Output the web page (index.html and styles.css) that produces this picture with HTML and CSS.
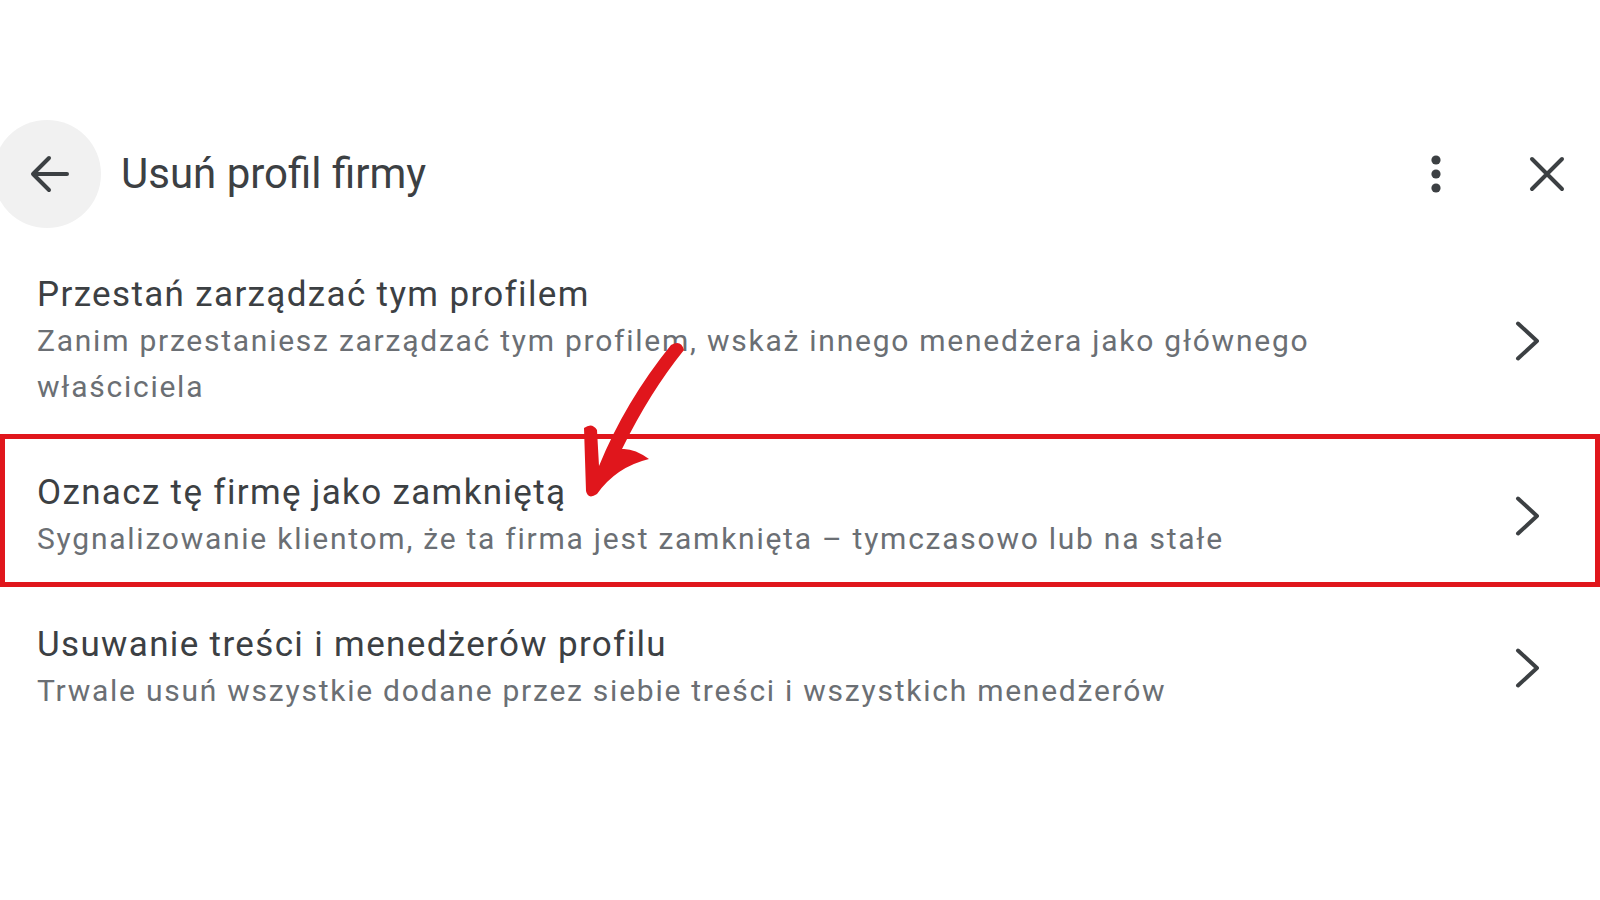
FILE: index.html
```html
<!DOCTYPE html>
<html lang="pl">
<head>
<meta charset="utf-8">
<title>Usuń profil firmy</title>
<link rel="stylesheet" href="styles.css">
</head>
<body>
<div class="page">
  <header class="topbar">
    <button class="back" aria-label="Wstecz">
      <svg width="40" height="40" viewBox="0 0 40 40"><path d="M38 20H5M20 4 4 20l16 16" fill="none" stroke="#3c4043" stroke-width="4" stroke-linecap="round" stroke-linejoin="round"/></svg>
    </button>
    <h1 class="title">Usuń profil firmy</h1>
    <div class="actions">
      <button class="icon-btn" aria-label="Więcej">
        <svg width="12" height="40" viewBox="0 0 12 40"><circle cx="6" cy="6" r="4.6" fill="#3c4043"/><circle cx="6" cy="20" r="4.6" fill="#3c4043"/><circle cx="6" cy="34" r="4.6" fill="#3c4043"/></svg>
      </button>
      <button class="icon-btn" aria-label="Zamknij">
        <svg width="36" height="36" viewBox="0 0 36 36"><path d="M3 3l30 30M33 3 3 33" fill="none" stroke="#3c4043" stroke-width="4" stroke-linecap="round"/></svg>
      </button>
    </div>
  </header>

  <ul class="list">
    <li class="row">
      <div class="text">
        <div class="row-title">Przestań zarządzać tym profilem</div>
        <div class="row-sub">Zanim przestaniesz zarządzać tym profilem, wskaż innego menedżera jako głównego właściciela</div>
      </div>
      <svg class="chev" width="28" height="40" viewBox="0 0 28 40"><path d="M3 2.5 22 20 3 37.5" fill="none" stroke="#3c4043" stroke-width="4" stroke-linecap="round" stroke-linejoin="round"/></svg>
    </li>
    <li class="row">
      <div class="text">
        <div class="row-title">Oznacz tę firmę jako zamkniętą</div>
        <div class="row-sub">Sygnalizowanie klientom, że ta firma jest zamknięta – tymczasowo lub na stałe</div>
      </div>
      <svg class="chev" width="28" height="40" viewBox="0 0 28 40"><path d="M3 2.5 22 20 3 37.5" fill="none" stroke="#3c4043" stroke-width="4" stroke-linecap="round" stroke-linejoin="round"/></svg>
    </li>
    <li class="row">
      <div class="text">
        <div class="row-title">Usuwanie treści i menedżerów profilu</div>
        <div class="row-sub">Trwale usuń wszystkie dodane przez siebie treści i wszystkich menedżerów</div>
      </div>
      <svg class="chev" width="28" height="40" viewBox="0 0 28 40"><path d="M3 2.5 22 20 3 37.5" fill="none" stroke="#3c4043" stroke-width="4" stroke-linecap="round" stroke-linejoin="round"/></svg>
    </li>
  </ul>

  <div class="highlight" aria-hidden="true"></div>
  <svg class="arrow" width="130" height="180" viewBox="0 0 130 180" aria-hidden="true">
    <path d="M114 20 Q111 9 101 15 Q55 72 29 136 L27 100 Q22 92 14 98 L16 161 Q18 170 27 164 Q46 137 79 129 Q64 118 52 119 Q80 62 114 20 Z" fill="#e0161c"/>
  </svg>
</div>
</body>
</html>
```

FILE: styles.css
```css
* { box-sizing: border-box; }

html, body {
  margin: 0;
  padding: 0;
  background: #ffffff;
}

body {
  font-family: Roboto, "Noto Sans", "Liberation Sans", sans-serif;
  color: #3c4043;
}

.page {
  position: relative;
  width: 1600px;
  height: 900px;
  overflow: hidden;
}

.topbar {
  display: flex;
  align-items: center;
  padding: 120px 29px 0 0;
  height: 228px;
}

.back {
  width: 108px;
  height: 108px;
  margin-left: -7px;
  border: 0;
  border-radius: 50%;
  background: #f1f1f1;
  display: flex;
  align-items: center;
  justify-content: center;
  padding: 0;
}

.back svg { margin-left: 3px; }

.title {
  margin: 0 0 0 20px;
  font-size: 42px;
  font-weight: 400;
  color: #3c4043;
  line-height: 108px;
  flex: 1;
}

.actions {
  display: flex;
  align-items: center;
  gap: 63px;
}

.icon-btn {
  width: 48px;
  height: 48px;
  border: 0;
  background: transparent;
  padding: 0;
  display: flex;
  align-items: center;
  justify-content: center;
}

.list {
  list-style: none;
  margin: 14px 0 0;
  padding: 0;
}

.row {
  display: flex;
  align-items: center;
  padding: 30px 57px 30px 37px;
}

.text {
  flex: 1;
  padding-right: 100px;
}

.row-title {
  font-size: 35px;
  line-height: 46px;
  letter-spacing: 1.35px;
  color: #3c4043;
}

.row-sub {
  font-size: 30px;
  line-height: 46px;
  letter-spacing: 1.75px;
  color: #6b6f74;
}

.chev { flex: none; }

.highlight {
  position: absolute;
  left: 0;
  top: 434px;
  width: 1600px;
  height: 153px;
  border: 5px solid #e0161c;
  pointer-events: none;
}

.arrow {
  position: absolute;
  left: 570px;
  top: 330px;
}
```
